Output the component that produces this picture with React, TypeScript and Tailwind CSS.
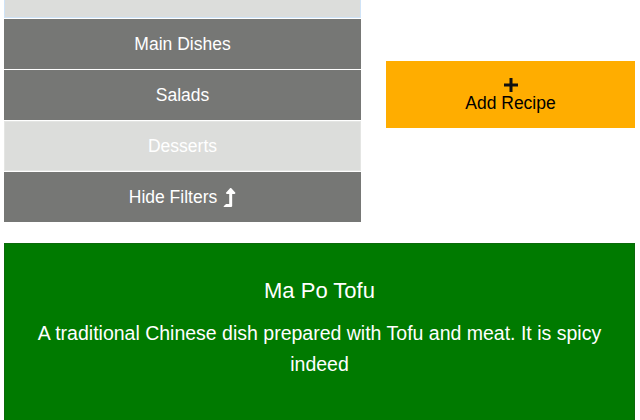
import { FaLevelUpAlt } from "react-icons/fa";

const filters = [
  { label: "Main Dishes", active: true },
  { label: "Salads", active: true },
  { label: "Desserts", active: false },
];

export default function App() {
  return (
    <div className="min-h-[420px] bg-white pl-[4px] pr-[5px] font-['Liberation_Sans',Arial,sans-serif]">
      <div className="flex gap-[25px]">
        {/* Filter list */}
        <div className="flex w-[357px] flex-col gap-[1px]">
          <div className="h-[18px] border border-t-0 border-[#cfe3f7] bg-[#dcdddb]" />
          {filters.map((f) => (
            <button
              key={f.label}
              className={`h-[50px] w-full text-[17.5px] text-white ${
                f.active ? "bg-[#767775]" : "bg-[#dcdddb] border border-[#e4e5e3]"
              }`}
            >
              {f.label}
            </button>
          ))}
          <button className="flex h-[50px] w-full items-center justify-center gap-[6px] bg-[#767775] text-[17.5px] text-white">
            Hide Filters <FaLevelUpAlt className="h-[19px] w-[13px]" />
          </button>
        </div>

        {/* Add recipe */}
        <button className="mt-[61px] flex h-[67px] w-[249px] flex-col items-center justify-center bg-[#ffad00] text-[17.5px] text-black">
          <svg width="16" height="16" viewBox="0 0 16 16" className="mb-[1px]">
            <path d="M8 1v14M1 8h14" stroke="#111" strokeWidth="3" />
          </svg>
          <span className="leading-[19px]">Add Recipe</span>
        </button>
      </div>

      {/* Recipe card */}
      <div className="mt-[21px] h-[180px] border border-[#0b6a0b] bg-[#007a00] px-6 pt-[32px] text-center text-white">
        <h2 className="text-[22px] leading-[30px]">Ma Po Tofu</h2>
        <p className="mt-[12px] text-[19.5px] leading-[31px]">
          A traditional Chinese dish prepared with Tofu and meat. It is spicy indeed
        </p>
      </div>
    </div>
  );
}
